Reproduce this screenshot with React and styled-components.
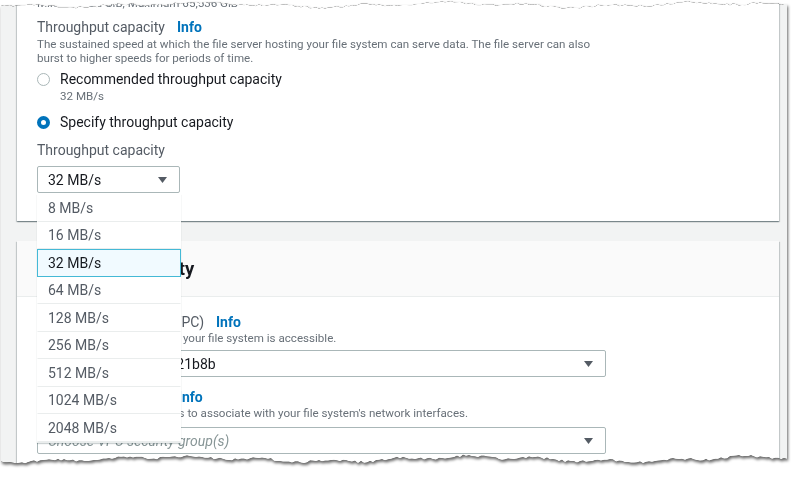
import React from "react";
import styled, { createGlobalStyle } from "styled-components";

const GlobalStyle = createGlobalStyle`
  html, body {
    margin: 0;
    background: #ffffff;
  }
  body {
    width: 800px;
    height: 478px;
    overflow: hidden;
    font-family: Roboto, "Liberation Sans", Arial, sans-serif;
    color: #16191f;
  }
`;

// torn paper edge, computed once from a seeded random walk
const tornEdge = (() => {
  let seed = 11;
  const rnd = () => {
    seed = (seed * 16807) % 2147483647;
    return seed / 2147483647;
  };
  const w = 786;
  const pts = [];
  for (let x = 0; x <= w; x += 3) {
    const y = 5 + 1.8 * Math.sin(x / 41) + 1.2 * Math.sin(x / 13 + 2) + (rnd() - 0.5) * 2.2;
    pts.push(`${x}px ${y.toFixed(1)}px`);
  }
  pts.push(`${w}px 4px`);
  for (let x = w; x >= 0; x -= 3) {
    const y = 459 + 2.2 * Math.sin(x / 47 + 1) + 1.3 * Math.sin(x / 11) + (rnd() - 0.5) * 2.4;
    pts.push(`${x}px ${y.toFixed(1)}px`);
  }
  return `polygon(${pts.join(",")})`;
})();

const OPTIONS = ["8", "16", "32", "64", "128", "256", "512", "1024", "2048"];

const Paper = styled.div`
  width: 786px;
  margin-left: 1px;
  filter: drop-shadow(0 0 0.6px rgba(0, 0, 0, 0.95))
    drop-shadow(1px 2px 1.5px rgba(0, 0, 0, 0.6));
`;

const Sheet = styled.div`
  height: 472px;
  background: #f2f3f3;
  padding: 0 8px 0 16px;
  overflow: hidden;
  clip-path: ${tornEdge};
`;

const Card = styled.section`
  background: #ffffff;
  margin-top: ${(p) => p.$top}px;
  box-shadow: 0 1px 1px 0 rgba(0, 28, 36, 0.3), 1px 1px 1px 0 rgba(0, 28, 36, 0.15),
    -1px 1px 1px 0 rgba(0, 28, 36, 0.15);
`;

const CardBody = styled.div`
  padding: ${(p) => p.$pad};
`;

const CardHeader = styled.header`
  height: 55px;
  display: flex;
  align-items: center;
  padding: 0 20px;
  background: #fafafa;
  border-bottom: 1px solid #eaeded;
  h2 {
    margin: 0;
    font-size: 18.4px;
    font-weight: 700;
    color: #16191f;
  }
`;

const Hint = styled.div`
  font-size: 11.6px;
  line-height: 14px;
  color: #687078;
  margin-top: ${(p) => p.$top || 0}px;
`;

const Field = styled.div`
  margin-top: ${(p) => p.$top || 0}px;
`;

const LabelRow = styled.div`
  display: flex;
  align-items: center;
  gap: 12px;
  font-size: 14px;
  line-height: 18px;
  color: #545b64;
`;

const Info = styled.a`
  color: #0073bb;
  font-weight: 700;
  text-decoration: none;
`;

const RadioGroup = styled.div`
  margin-top: 4px;
  display: flex;
  flex-direction: column;
  gap: 9px;
`;

const RadioRow = styled.label`
  display: flex;
  align-items: center;
  gap: 10px;
  font-size: 14px;
  line-height: 20px;
  color: #16191f;
`;

const RadioDot = styled.span`
  width: 13px;
  height: 13px;
  box-sizing: border-box;
  border-radius: 50%;
  background: #ffffff;
  border: ${(p) => (p.$checked ? "4px solid #0073bb" : "1.5px solid #aab7b8")};
`;

const SubHint = styled(Hint)`
  padding-left: 23px;
`;

const SelectWrap = styled.div`
  position: relative;
  width: ${(p) => p.$width}px;
  margin-top: ${(p) => p.$top}px;
`;

const SelectBox = styled.div`
  height: 27px;
  box-sizing: border-box;
  border: 1px solid #aab7b8;
  border-radius: 2px;
  display: flex;
  align-items: center;
  justify-content: space-between;
  padding: 0 12px 0 10px;
  font-size: 14px;
  color: ${(p) => (p.$placeholder ? "#879596" : "#16191f")};
  font-style: ${(p) => (p.$placeholder ? "italic" : "normal")};
  background: #ffffff;
`;

const Caret = () => (
  <svg width="9" height="6" viewBox="0 0 9 6">
    <path d="M0 0 H9 L4.5 6 Z" fill="#545b64" />
  </svg>
);

const Menu = styled.ul`
  position: absolute;
  z-index: 5;
  top: 100%;
  left: 0;
  width: 144px;
  box-sizing: border-box;
  margin: 1px 0 0;
  padding: 0;
  list-style: none;
  background: #ffffff;
  border: 1px solid #eaeded;
  border-top: none;
  box-shadow: 0 1px 1px rgba(0, 28, 36, 0.2);
`;

const Option = styled.li`
  height: 27.5px;
  box-sizing: border-box;
  display: flex;
  align-items: center;
  padding-left: 10px;
  font-size: 14px;
  color: ${(p) => (p.$selected ? "#16191f" : "#545b64")};
  background: ${(p) => (p.$selected ? "#f1faff" : "#ffffff")};
  border: 1px solid ${(p) => (p.$selected ? "#44b9d6" : "transparent")};
  border-bottom-color: ${(p) => (p.$selected ? "#44b9d6" : "#eaeded")};
  margin: 0 -1px;
`;

const Select = ({ value, width, top, placeholder, children }) => (
  <SelectWrap $width={width} $top={top}>
    <SelectBox $placeholder={placeholder}>
      <span>{value}</span>
      <Caret />
    </SelectBox>
    {children}
  </SelectWrap>
);

export default function App() {
  return (
    <>
      <GlobalStyle />
      <Paper>
        <Sheet>
          <Card $top={-10}>
            <CardBody $pad="6px 20px 28px">
              <Hint>Minimum 32 GiB, Maximum 65,536 GiB</Hint>
              <Field $top={8}>
                <LabelRow>
                  <span>Throughput capacity</span>
                  <Info href="#">Info</Info>
                </LabelRow>
                <Hint $top={1}>
                  The sustained speed at which the file server hosting your file system can serve data. The file server can also
                  <br />
                  burst to higher speeds for periods of time.
                </Hint>
                <RadioGroup>
                  <div>
                    <RadioRow>
                      <RadioDot />
                      Recommended throughput capacity
                    </RadioRow>
                    <SubHint>32 MB/s</SubHint>
                  </div>
                  <RadioRow>
                    <RadioDot $checked />
                    Specify throughput capacity
                  </RadioRow>
                </RadioGroup>
              </Field>
              <Field $top={9}>
                <LabelRow>
                  <span>Throughput capacity</span>
                </LabelRow>
                <Select value="32 MB/s" width={143} top={7}>
                  <Menu>
                    {OPTIONS.map((o) => (
                      <Option key={o} $selected={o === "32"}>
                        {o} MB/s
                      </Option>
                    ))}
                  </Menu>
                </Select>
              </Field>
            </CardBody>
          </Card>

          <Card $top={20}>
            <CardHeader>
              <h2>Network &amp; security</h2>
            </CardHeader>
            <CardBody $pad="16px 20px 20px">
              <Field>
                <LabelRow>
                  <span>Virtual Private Cloud (VPC)</span>
                  <Info href="#">Info</Info>
                </LabelRow>
                <Hint>Specify the VPC from which your file system is accessible.</Hint>
                <Select value="vpc-0e1f5c2a9d7f3e21b8b" width={569} top={5} />
              </Field>
              <Field $top={11}>
                <LabelRow>
                  <span>VPC Security Groups</span>
                  <Info href="#">Info</Info>
                </LabelRow>
                <Hint>Specify VPC Security Groups to associate with your file system's network interfaces.</Hint>
                <Select value="Choose VPC security group(s)" width={569} top={7} placeholder />
              </Field>
            </CardBody>
          </Card>
        </Sheet>
      </Paper>
    </>
  );
}
